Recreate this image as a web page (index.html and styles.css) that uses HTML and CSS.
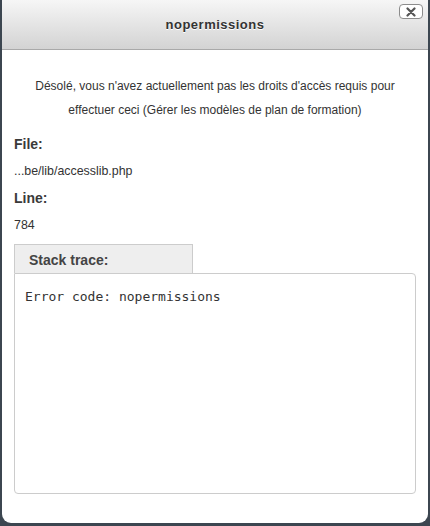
FILE: index.html
```html
<!DOCTYPE html>
<html lang="en">
<head>
  <meta charset="UTF-8">
  <meta name="viewport" content="width=device-width, initial-scale=1.0">
  <title>nopermissions</title>
  <link rel="stylesheet" href="styles.css">
</head>
<body>
  <div class="dialog">
    <div class="dialog-header">
      <h2 class="dialog-title">nopermissions</h2>
      <button class="close-button" aria-label="Close">
        <svg width="10" height="10" viewBox="0 0 10 10"><path d="M1.5 1.5 L8.5 8.5 M8.5 1.5 L1.5 8.5" stroke="#555" stroke-width="2.2" stroke-linecap="round"/></svg>
      </button>
    </div>

    <div class="dialog-body">
      <p class="message">Désolé, vous n'avez actuellement pas les droits d'accès requis pour effectuer ceci (Gérer les modèles de plan de formation)</p>

      <h3 class="label">File:</h3>
      <p class="value">...be/lib/accesslib.php</p>

      <h3 class="label">Line:</h3>
      <p class="value">784</p>

      <div class="tab">Stack trace:</div>
      <pre class="trace">Error code: nopermissions</pre>
    </div>
  </div>
</body>
</html>
```

FILE: styles.css
```css
html, body {
  height: 100%;
}

body {
  margin: 0;
  font-family: 'Liberation Sans', Arial, sans-serif;
  background-color: #3c4650;
  overflow: hidden;
}

.dialog {
  margin: 0 2px;
  height: 523px;
  background-color: #fff;
  border-radius: 0 0 9px 9px;
  display: flex;
  flex-direction: column;
  box-sizing: border-box;
}

.dialog-header {
  position: relative;
  height: 49px;
  background: linear-gradient(#f6f6f6, #d3d3d3);
  border-bottom: 1px solid #a9a9a9;
  display: flex;
  align-items: center;
  justify-content: center;
}

.dialog-title {
  margin: 0;
  font-size: 13px;
  font-weight: bold;
  letter-spacing: 0.5px;
  color: #333;
  text-shadow: 0 1px 0 #fff;
}

.close-button {
  position: absolute;
  top: 4px;
  right: 5px;
  width: 24px;
  height: 15px;
  padding: 0;
  background-color: #fff;
  border: 1px solid #8c8c8c;
  border-radius: 4px;
  display: flex;
  align-items: center;
  justify-content: center;
  cursor: pointer;
}

.dialog-body {
  flex: 1;
  padding: 24px 12px 29px;
  display: flex;
  flex-direction: column;
}

.message {
  margin: 0 0 10px;
  text-align: center;
  font-size: 12px;
  line-height: 24px;
  color: #333;
}

.label {
  margin: 0;
  font-size: 14px;
  line-height: 24px;
  font-weight: bold;
  color: #3a3a3a;
}

.value {
  margin: 3px 0 3px;
  font-size: 12.4px;
  line-height: 24px;
  color: #333;
}

.tab {
  align-self: flex-start;
  margin-top: 4px;
  width: 179px;
  height: 29px;
  box-sizing: border-box;
  padding: 7px 14px;
  background-color: #eee;
  border: 1px solid #ccc;
  border-bottom: none;
  font-size: 14px;
  font-weight: bold;
  color: #444;
}

.trace {
  flex: 1;
  margin: 0;
  padding: 15px 10px;
  border: 1px solid #ccc;
  border-radius: 0 4px 4px 4px;
  font-family: 'DejaVu Sans Mono', monospace;
  font-size: 13px;
  color: #333;
}
```
